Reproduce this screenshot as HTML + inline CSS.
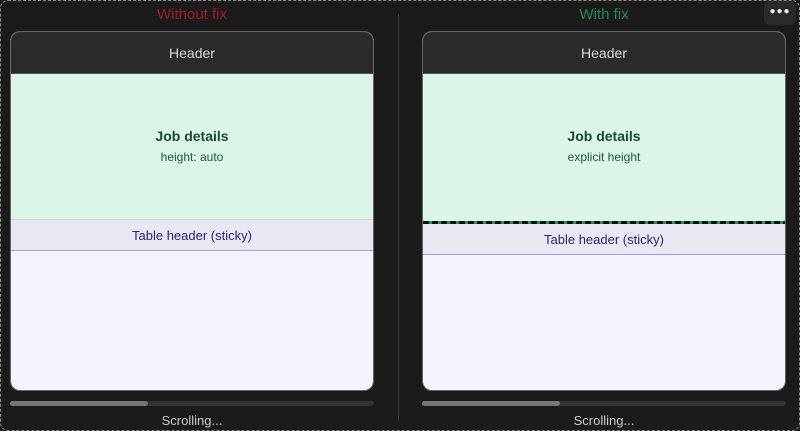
<!DOCTYPE html>
<html><head><style>
*{box-sizing:border-box;margin:0;padding:0}
body{width:800px;height:431px;background:#1b1b1b;font-family:"Liberation Sans",sans-serif;position:relative;overflow:hidden}
.frame{position:absolute;left:0;top:0;width:800px;height:431px;border:1px dashed #8a8a8a;border-radius:8px}
.div{position:absolute;left:398px;top:14px;width:1px;height:406px;background:#3a3a3a}
.title{position:absolute;top:6px;width:364px;text-align:center;font-size:15px}
.card{position:absolute;top:31px;width:364px;height:360px;border:1.5px solid #666;border-radius:10px;overflow:hidden;background:#f4f2fd}
.hd{height:42px;background:#2b2b2b;color:#d8d8d8;font-size:14px;text-align:center;line-height:42px;border-bottom:1px solid #555}
.green{background:#dcf5e8;text-align:center;color:#1c5a3a}
.green b{display:block;font-size:14px;font-weight:bold;color:#164a30;padding-top:54px}
.green span{display:block;font-size:12px;margin-top:6px}
.th{height:31px;background:#e8e7f2;border-bottom:1.5px solid #a99ee0;text-align:center;line-height:31px;font-size:13px;color:#2e2470}
.track{position:absolute;top:401px;width:364px;height:5px;border-radius:3px;background:#333}
.thumb{height:5px;width:138px;border-radius:3px;background:#777}
.scr{position:absolute;top:413px;width:364px;text-align:center;color:#ccc;font-size:13px}
.dots{position:absolute;left:764px;top:1px;width:32px;height:24px;border-radius:6px;background:#2a2a2a;color:#eee;text-align:center;font-size:10px;line-height:22px;letter-spacing:1px}
</style></head><body>
<div class="frame"></div>
<div class="div"></div>
<div class="title" style="left:10px;color:#a5182c">Without fix</div>
<div class="title" style="left:422px;color:#1f8a55">With fix</div>
<div class="dots">●●●</div>
<div class="card" style="left:10px">
 <div class="hd">Header</div>
 <div class="green" style="height:146px;border-bottom:1px solid #bfe0cf"><b>Job details</b><span>height: auto</span></div>
 <div class="th">Table header (sticky)</div>
</div>
<div class="card" style="left:422px">
 <div class="hd">Header</div>
 <div class="green" style="height:147px"><b>Job details</b><span>explicit height</span></div>
 <div style="height:3px;background:repeating-linear-gradient(90deg,#111 0 6px,#1f9a5a 6px 9px)"></div>
 <div class="th">Table header (sticky)</div>
</div>
<div class="track" style="left:10px"><div class="thumb"></div></div>
<div class="track" style="left:422px"><div class="thumb"></div></div>
<div class="scr" style="left:10px">Scrolling...</div>
<div class="scr" style="left:422px">Scrolling...</div>
</body></html>
